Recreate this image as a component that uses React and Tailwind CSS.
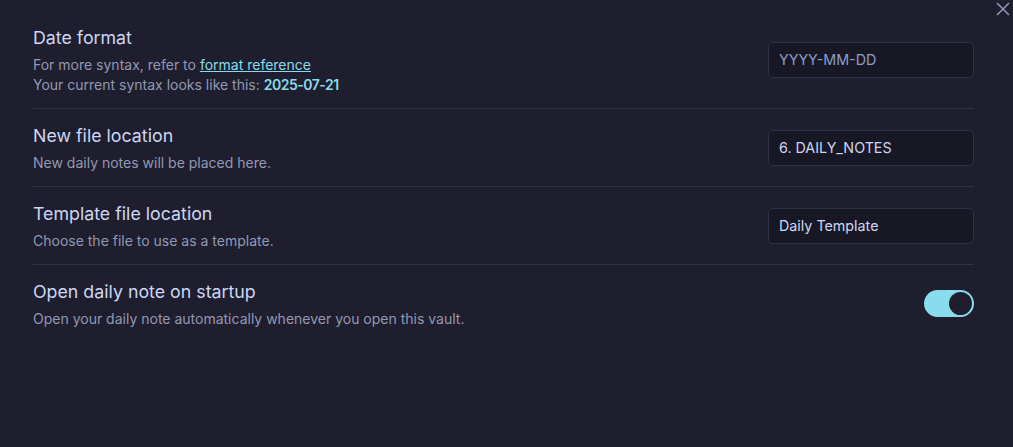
import { useState } from 'react';

const Row = ({ title, children, control, first }) => (
    <div className={`flex items-center justify-between pt-[15px] pb-[13px] ${first ? '' : 'border-t border-[#313244]'}`}>
        <div className="flex flex-col">
            <div className="text-[17.8px] leading-[24px] text-[#cdd6f4]">{title}</div>
            <div className="mt-[5px] text-[14px] leading-[20px] text-[#9399b2]">{children}</div>
        </div>
        <div className="mb-[2px]">{control}</div>
    </div>
);

const TextBox = ({ value, placeholder }) => (
    <div className="flex h-[36px] w-[206px] items-center rounded-[5px] border border-[#313244] bg-[#181825] px-[10px] text-[14.3px]">
        {value ? (
            <span className="text-[#cdd6f4]">{value}</span>
        ) : (
            <span className="text-[#8b9dca]">{placeholder}</span>
        )}
    </div>
);

const Toggle = ({ on, onClick }) => (
    <button
        onClick={onClick}
        className={`flex h-[27px] w-[50px] items-center rounded-full px-[2px] ${on ? 'justify-end bg-[#89dceb]' : 'justify-start bg-[#45475a]'}`}
    >
        <span className="h-[23px] w-[23px] rounded-full bg-[#1e1e2e]" />
    </button>
);

export default function App() {

    const [startup, setStartup] = useState(true);

    return (
        <div
            className="relative h-[447px] w-full overflow-hidden bg-[#1e1e2e] pl-[33px] pr-[39px] pt-[11px]"
            style={{ fontFamily: 'Inter, "Noto Sans", sans-serif' }}
        >

            {/* close button */}
            <button className="absolute right-[2px] top-[1px] text-[#8d95b8]">
                <svg width="16" height="16" viewBox="0 0 16 16" fill="none" stroke="currentColor" strokeWidth="1.6">
                    <path d="M2 2L14 14M14 2L2 14" />
                </svg>
            </button>

            <Row
                first
                title="Date format"
                control={<TextBox placeholder="YYYY-MM-DD" />}
            >
                For more syntax, refer to{' '}
                <a className="text-[#89dceb] underline">format reference</a>
                <br />
                Your current syntax looks like this:{' '}
                <b className="font-semibold tracking-[-0.5px] text-[#89dceb]">2025-07-21</b>
            </Row>

            <Row
                title="New file location"
                control={<TextBox value="6. DAILY_NOTES" />}
            >
                New daily notes will be placed here.
            </Row>

            <Row
                title="Template file location"
                control={<TextBox value="Daily Template" />}
            >
                Choose the file to use as a template.
            </Row>

            <Row
                title="Open daily note on startup"
                control={<Toggle on={startup} onClick={() => setStartup(!startup)} />}
            >
                Open your daily note automatically whenever you open this vault.
            </Row>

        </div>
    );
}
